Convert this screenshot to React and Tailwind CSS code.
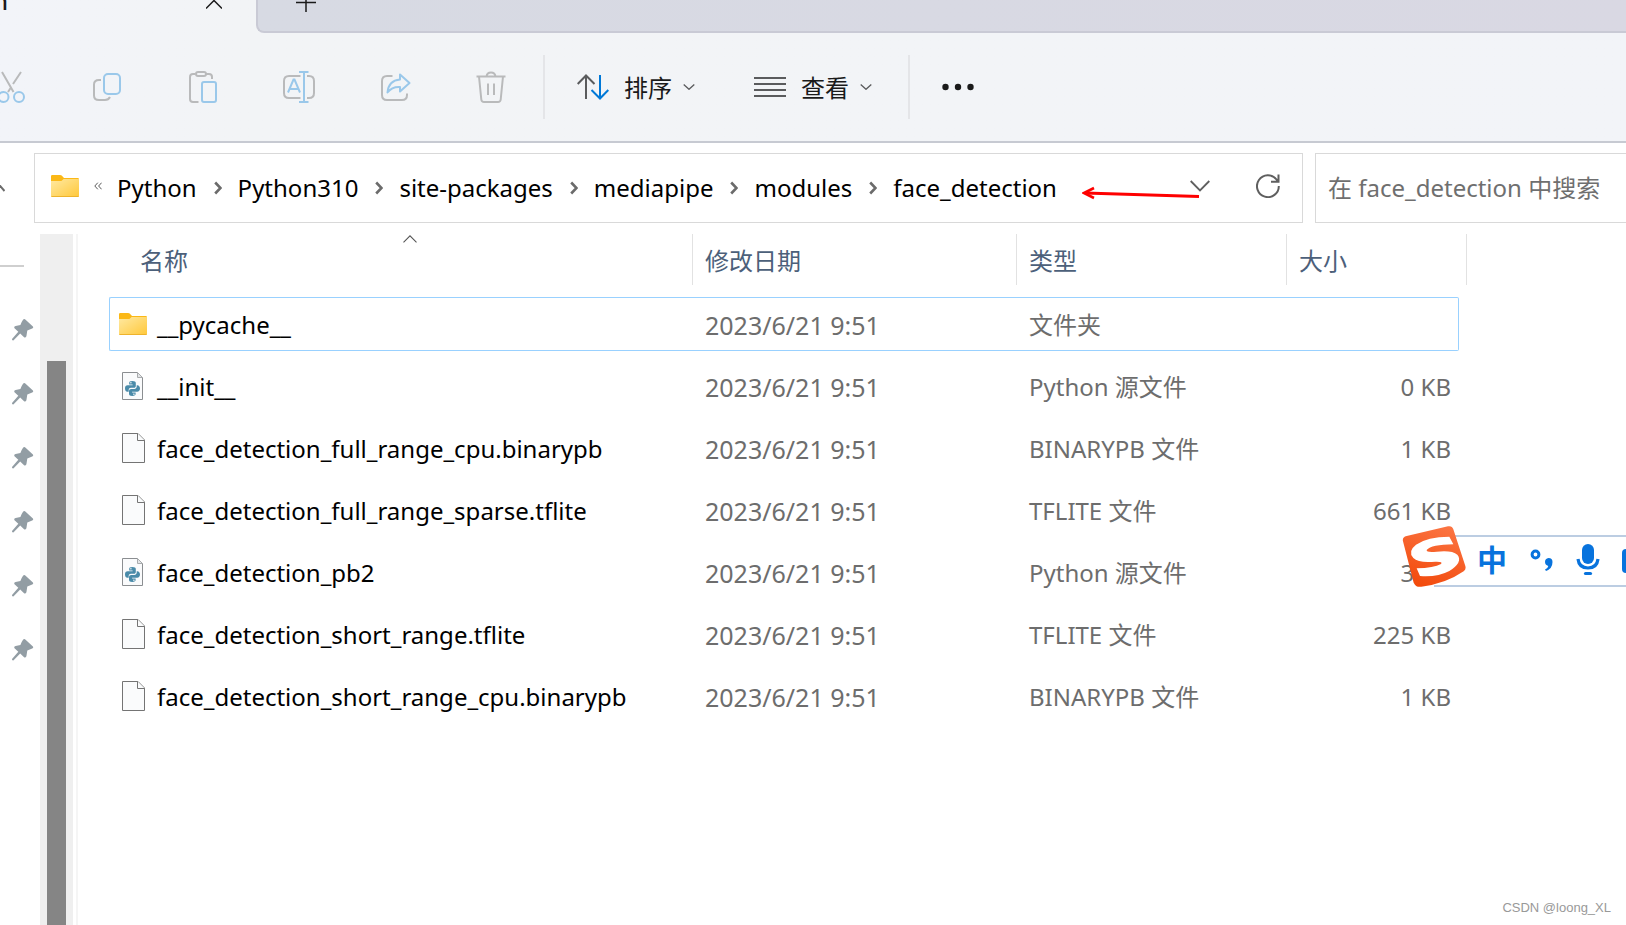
const FONT = "font-['Noto_Sans','Noto_Sans_CJK_SC',sans-serif]";

function Chevron({ className, d, box, stroke = 2 }) {
  return (
    <svg className={className} viewBox={box} fill="none" stroke="currentColor" strokeWidth={stroke} aria-hidden="true">
      <path d={d} />
    </svg>
  );
}

function FolderIcon({ id }) {
  return (
    <svg className="h-[22px] w-7 shrink-0" viewBox="0 0 28 22" aria-hidden="true">
      <defs>
        <linearGradient id={id} x1="0" y1="0" x2="1" y2="1">
          <stop offset="0" stopColor="#ffe9a2" />
          <stop offset="1" stopColor="#ffc83a" />
        </linearGradient>
      </defs>
      <path d="M0 1.2Q0 0 1.2 0H9.2Q10 0 10.7.6L13 3H26.8Q28 3 28 4.2V10H0Z" fill="#fbb816" />
      <path d="M0 6H9.6Q10.4 6 11 5.4L12.6 4H28V20.8Q28 22 26.8 22H1.2Q0 22 0 20.8Z" fill={`url(#${id})`} />
      <path d="M.4 21.5H27.6" stroke="#eeb32c" />
    </svg>
  );
}

function FileIcon() {
  return (
    <svg className="h-[30px] w-[23px] shrink-0" viewBox="0 0 23 30" fill="#fafbfc" stroke="#747474" aria-hidden="true">
      <path d="M.5.5H16L22.5 7V29.5H.5Z" />
      <path d="M15.5.5V7.5H22.5" />
    </svg>
  );
}

function PythonIcon() {
  return (
    <svg className="h-7 w-[21px] shrink-0" viewBox="0 0 21 28" aria-hidden="true">
      <path d="M.5.5H15.5L20.5 5.5V27.5H.5Z" fill="#fafbfc" stroke="#8b8e91" />
      <path d="M15.5.5V5.5H20.5Z" fill="#e3e5e7" stroke="#a8abad" />
      <path d="M10.4 9C7.6 9 7.2 9.8 7.2 10.9V12.5H10.6V13.2H5.6C4 13.2 3 14.4 3 16.4S4 19.7 5.4 19.7H6.7V18C6.7 16.7 7.7 15.8 9 15.8H12C13 15.8 13.8 15 13.8 14V10.9C13.8 9.7 12.6 9 10.4 9Z" fill="#4a8ba9" />
      <path d="M10.1 24C12.9 24 13.6 23.2 13.6 22.1V20.5H10.1V19.8H15.2C16.8 19.8 18 18.6 18 16.6S16.9 13.3 15.4 13.3H14.7V14.6C14.7 16 13.6 16.9 12.4 16.9H9.2C8 16.9 7 17.8 7 18.9V22.1C7 23.3 8.2 24 10.1 24Z" fill="#4a8ba9" />
      <circle cx="8.9" cy="10.8" r=".7" fill="#fff" />
      <circle cx="11.9" cy="22.2" r=".7" fill="#fff" />
    </svg>
  );
}

function PinIcon() {
  return (
    <svg className="h-[22px] w-[22px]" viewBox="0 0 22 22" fill="#929da4" aria-hidden="true">
      <path d="M11.2.6Q12.4-.4 13.6.7L20.9 7.4Q21.8 8.8 20.2 9.5L15.3 11.6Q14.9 14.6 14.4 17.2Q13.4 19.3 11.8 17.9L8.2 14.4L1.6 21.2Q.3 21.8 0 20.6V19.9L6.3 12.8L2.5 9.3Q1.6 7.6 3.6 7L8.4 6Q9.4 3.2 11.2.6Z" />
    </svg>
  );
}

const GREY = "#b9babb";
const BLUE = "#9ac8ea";

const tools = [
  {
    label: "剪切",
    art: (
      <>
        <path d="M7 1 18.5 21M26 1 18 13M15.8 16.8 13 21" stroke={GREY} />
        <circle cx="8.5" cy="26" r="5" stroke={BLUE} />
        <circle cx="24" cy="26" r="5" stroke={BLUE} />
      </>
    ),
  },
  {
    label: "复制",
    art: (
      <>
        <path d="M10 9H8Q3 9 3 13.5V24.5Q3 29 8 29H14Q17.5 29 19 26" stroke={GREY} />
        <rect x="13" y="3" width="16" height="20" rx="4" stroke={BLUE} />
      </>
    ),
  },
  {
    label: "粘贴",
    art: (
      <>
        <path d="M8.5 3H6Q3 3 3 6V28Q3 31 6 31H11.5M19 3H22Q25 3 25 6V8" stroke={GREY} />
        <rect x="9" y="1" width="10" height="4" rx="2" stroke={GREY} />
        <rect x="15" y="11" width="14" height="20" rx="2" stroke={BLUE} />
      </>
    ),
  },
  {
    label: "重命名",
    art: (
      <>
        <path d="M17.5 5H6Q1 5 1 10V22Q1 27 6 27H17.5M24 5H26Q31 5 31 10V22Q31 27 26 27H24" stroke={GREY} />
        <path d="M16 1H25.5M16 31H25.5M21 1V31M5 21.5 10.5 8.5H11.5L17 21.5M7 18H15" stroke={BLUE} />
      </>
    ),
  },
  {
    label: "共享",
    art: (
      <>
        <path d="M13.5 5H8Q3 5 3 10V24Q3 29 8 29H23Q28 29 28 24V22.5" stroke={GREY} />
        <path d="M21 3.500 30.500 12 21 20.500V16Q13 15.500 8.500 21.500Q9.500 9.500 21 8.500Z" stroke={BLUE} strokeLinejoin="round" />
      </>
    ),
  },
  {
    label: "删除",
    art: (
      <>
        <path d="M1.500 5.500H30.500M4 5.500 6.300 28.500Q6.600 31 9 31H23Q25.400 31 25.700 28.500L28 5.500M11.500 5.500Q12 1.500 16 1.500T20.500 5.500M13 12.500V24M19 12.500V24" stroke={GREY} />
      </>
    ),
  },
];

const crumbs = ["Python", "Python310", "site-packages", "mediapipe", "modules", "face_detection"];

const files = [
  { name: "__pycache__", kind: "folder", type: "文件夹", size: "" },
  { name: "__init__", kind: "python", type: "Python 源文件", size: "0 KB" },
  { name: "face_detection_full_range_cpu.binarypb", kind: "file", type: "BINARYPB 文件", size: "1 KB" },
  { name: "face_detection_full_range_sparse.tflite", kind: "file", type: "TFLITE 文件", size: "661 KB" },
  { name: "face_detection_pb2", kind: "python", type: "Python 源文件", size: "3 KB" },
  { name: "face_detection_short_range.tflite", kind: "file", type: "TFLITE 文件", size: "225 KB" },
  { name: "face_detection_short_range_cpu.binarypb", kind: "file", type: "BINARYPB 文件", size: "1 KB" },
];

function TabStrip() {
  return (
    <div className="flex h-[33px] overflow-hidden">
      <div className="flex w-64 shrink-0 justify-between pr-[34px]">
        <span className="-mt-[15px] -ml-[7px] text-2xl leading-8 font-medium text-[#1a1a1a]">n</span>
        <button aria-label="关闭标签页" className="h-2.5 w-4">
          <Chevron className="h-2.5 w-4 text-[#1a1a1a]" box="0 0 16 10" d="M0 8.500 8 .5 16 8.500" stroke={1.5} />
        </button>
      </div>
      <div className="flex flex-1 rounded-bl-lg border-b-2 border-l-2 border-[#c9cad5] bg-linear-to-r from-[#d7dae3] to-[#d9d8e3] pl-[38px]">
        <button aria-label="新建标签页" className="h-3 w-5">
          <svg className="h-3 w-5" viewBox="0 0 20 12" fill="none" stroke="#1a1a1a" strokeWidth="1.500" aria-hidden="true">
            <path d="M0 2.500H20M10 0V12" />
          </svg>
        </button>
      </div>
    </div>
  );
}

function Toolbar() {
  return (
    <div className="flex h-[110px] items-center overflow-hidden border-b-2 border-[#c7cad2]">
      <div className="-ml-[5px] flex gap-16">
        {tools.map((t) => (
          <button key={t.label} aria-label={t.label} className="h-8 w-8">
            <svg className="h-8 w-8" viewBox="0 0 32 32" fill="none" strokeWidth="2" aria-hidden="true">
              {t.art}
            </svg>
          </button>
        ))}
      </div>
      <div className="ml-9 h-16 w-0.5 bg-[#e4e5e8]" />
      <button className="ml-8 flex items-center gap-[15px] text-2xl leading-8 text-[#1a1a1a]">
        <svg className="h-[26px] w-8" viewBox="0 0 32 26" fill="none" strokeWidth="2" aria-hidden="true">
          <path d="M9 25V1.500M.7 10 9 1.500 17.500 10" stroke="#5a5b5d" />
          <path d="M23 1V24.500M14.500 16 23 24.500 31.300 16" stroke="#0078d7" />
        </svg>
        <span className="pt-0.5">排序</span>
        <Chevron className="-ml-1 h-1.5 w-3 text-[#5a5b5d]" box="0 0 12 6" d="M.7.5 6 5.300 11.300.5" stroke={1.3} />
      </button>
      <button className="ml-[59px] flex items-center gap-[15px] text-2xl leading-8 text-[#1a1a1a]">
        <svg className="h-5 w-8" viewBox="0 0 32 20" fill="none" stroke="#5a5b5d" strokeWidth="2" aria-hidden="true">
          <path d="M0 1H32M0 7H32M0 13H32M0 19H32" />
        </svg>
        <span className="pt-0.5">查看</span>
        <Chevron className="-ml-1 h-1.5 w-3 text-[#5a5b5d]" box="0 0 12 6" d="M.7.5 6 5.300 11.300.5" stroke={1.3} />
      </button>
      <div className="ml-9 h-16 w-0.5 bg-[#e4e5e8]" />
      <button aria-label="更多" className="ml-8">
        <svg className="h-2 w-8" viewBox="0 0 32 8" fill="#1a1a1a" aria-hidden="true">
          <circle cx="3.500" cy="4" r="3.200" />
          <circle cx="16" cy="4" r="3.200" />
          <circle cx="28.500" cy="4" r="3.200" />
        </svg>
      </button>
    </div>
  );
}

function AddressRow() {
  return (
    <div className="flex pt-2.5">
      <button aria-label="向上" className="flex w-[34px] shrink-0 items-center">
        <Chevron className="h-2 w-[5px] text-[#6b6b6b]" box="0 0 5 8" d="M-2 -.5 4.500 7" />
      </button>
      <div className="relative flex h-[70px] flex-1 items-center border border-[#d9d9d9] pl-4">
        <div className="flex items-center pb-1">
          <FolderIcon id="crumbFolder" />
          <button aria-label="更多位置" className="mx-[15px] h-2 w-2">
            <Chevron className="h-2 w-2 text-[#5a5a5a]" box="0 0 8 8" d="M3.800.7.8 4 3.800 7.300M7.600.7 4.600 4 7.600 7.300" stroke={1} />
          </button>
        </div>
        <nav aria-label="路径" className="flex items-center gap-[17px] text-2xl leading-8 text-black">
          {crumbs.map((c, i) => (
            <span key={c} className="flex items-center gap-4">
              {i > 0 && (
                <Chevron className="h-3.5 w-2 text-[#6b6b6b]" box="0 0 8 14" d="M1.200 1.500 6.500 7 1.200 12.500" stroke={2.6} />
              )}
              <a href="#path">{c}</a>
            </span>
          ))}
        </nav>
        <div className="mr-[22px] ml-auto flex items-center gap-[46px] pb-1 text-[#5f5f5f]">
          <button aria-label="历史记录">
            <Chevron className="h-3 w-5" box="0 0 20 12" d="M.7 1 10 10.500 19.300 1" stroke={1.8} />
          </button>
          <button aria-label="刷新">
            <svg className="h-6 w-6" viewBox="0 0 24 24" fill="none" stroke="currentColor" strokeWidth="2" aria-hidden="true">
              <path d="M22.800 12A10.900 10.900 0 1 1 20.500 5.500L22.500 7.500M22.500.5V7.800H15" />
            </svg>
          </button>
        </div>
        <svg className="absolute top-8 right-[102px] h-4 w-[118px]" viewBox="0 0 118 16" fill="none" stroke="#fe0000" strokeWidth="3" aria-hidden="true">
          <path d="M3 7 117 10.500" />
          <path d="M12 2 2 7 12 12" strokeWidth="2.600" />
        </svg>
      </div>
      <input
        aria-label="搜索"
        placeholder="在 face_detection 中搜索"
        className="ml-3 h-[70px] w-[311px] rounded-none border border-r-0 border-[#d9d9d9] pb-0.5 pl-3 text-2xl leading-8 outline-none placeholder:text-[#6f6f6f] placeholder:opacity-100"
      />
    </div>
  );
}

function Sidebar() {
  return (
    <div className="flex shrink-0">
      <div className="flex w-10 flex-col pt-[31px]">
        <div className="h-0.5 w-6 bg-[#cfcfcf]" />
        <div className="mt-[52px] ml-3 flex flex-col gap-[42px]">
          {[0, 1, 2, 3, 4, 5].map((i) => (
            <PinIcon key={i} />
          ))}
        </div>
      </div>
      <div className="flex w-[33px] flex-col bg-[#efefef] pt-[127px]">
        <div className="ml-[7px] w-[19px] flex-1 bg-[#858585]" />
      </div>
      <div className="ml-[3px] w-0.5 bg-[#f5f5f5]" />
    </div>
  );
}

function HeadCell({ children, className = "", pad = "pl-3" }) {
  return (
    <th className={`relative p-0 pb-3 text-left font-normal ${className}`}>
      <div className={`flex h-[51px] items-center border-r border-[#e2e2e2] pt-0.5 text-[#4c607a] ${pad}`}>{children}</div>
    </th>
  );
}

function FileTable() {
  return (
    <table className="ml-[31px] w-[1350px] table-fixed border-separate border-spacing-0 self-start text-2xl leading-8">
      <thead>
        <tr>
          <HeadCell className="w-[584px]" pad="pl-[31px]">
            名称
            <Chevron className="absolute top-px left-[294px] h-2 w-3.5 text-[#555555]" box="0 0 14 8" d="M.5 7.300 7 .8 13.500 7.300" stroke={1.1} />
          </HeadCell>
          <HeadCell className="w-[324px]">修改日期</HeadCell>
          <HeadCell className="w-[270px]">类型</HeadCell>
          <th className="p-0 pb-3 text-left font-normal">
            <div className="-mr-2 flex h-[51px] items-center border-r border-[#e2e2e2] pt-0.5 pl-3 text-[#4c607a]">大小</div>
          </th>
        </tr>
      </thead>
      <tbody>
        {files.map((f, i) => {
          const edge = i === 0 ? "border-[#99d1ff]" : "border-transparent";
          return (
            <tr key={f.name} className="text-[#6d6d6d]">
              <td className="p-0 pb-2">
                <div className={`flex h-[54px] items-center rounded-l-xs border-y border-l ${edge}`}>
                  <span className="flex w-[47px] pl-[9px]">
                    <span className={f.kind === "folder" ? "" : "pl-[3px]"}>
                      {f.kind === "folder" && <FolderIcon id="rowFolder" />}
                      {f.kind === "python" && <PythonIcon />}
                      {f.kind === "file" && <FileIcon />}
                    </span>
                  </span>
                  <span className="pt-0.5 whitespace-nowrap text-black">{f.name}</span>
                </div>
              </td>
              <td className="p-0 pb-2">
                <div className={`flex h-[54px] items-center border-y pt-0.5 pl-3 text-[25px] ${edge}`}>2023/6/21 9:51</div>
              </td>
              <td className="p-0 pb-2">
                <div className={`flex h-[54px] items-center border-y pt-0.5 pl-3 ${edge}`}>{f.type}</div>
              </td>
              <td className="p-0 pb-2">
                <div className={`flex h-[54px] items-center justify-end rounded-r-xs border-y border-r pt-0.5 pr-[7px] ${edge}`}>{f.size}</div>
              </td>
            </tr>
          );
        })}
      </tbody>
    </table>
  );
}

function ImeBar() {
  return (
    <div className="absolute top-[526px] right-0 flex h-[68px] w-56 items-center overflow-hidden">
      <div className="absolute top-[9px] right-0 left-8 h-[52px] border-y-2 border-[#bccde2] bg-white" />
      <svg className="relative h-[62px] w-16 shrink-0 self-start" viewBox="0 0 192 186" aria-hidden="true">
        <defs>
          <linearGradient id="sogou" x1=".7" y1="0" x2=".3" y2="1">
            <stop offset="0" stopColor="#fb7442" />
            <stop offset="1" stopColor="#f24a0c" />
          </linearGradient>
        </defs>
        <path d="M14 30 138 1Q150 -2 154 10L190 120Q193 130 185 136Q130 174 58 182Q42 185 35 170L3 46Q0 33 14 30Z" fill="url(#sogou)" />
        <path d="M142 32Q76 32 42 56Q16 76 34 96Q50 112 100 107Q124 106 117 114Q96 126 44 127L54 150Q106 154 142 135Q184 108 166 86Q150 72 104 77Q72 80 74 72Q88 56 154 55Z" fill="#fff" />
      </svg>
      <button className="relative ml-2.5 w-8 text-[30px] leading-8 font-bold text-[#0873dd]">中</button>
      <button aria-label="中文标点" className="relative ml-[22px]">
        <svg className="h-6 w-6" viewBox="0 0 24 24" aria-hidden="true">
          <circle cx="5.500" cy="6.500" r="3.400" fill="none" stroke="#0873dd" strokeWidth="3" />
          <path d="M18.500 10A4 4 0 0 1 22.500 14Q22.500 20.500 16 23L15 21.500Q18 20 18.300 17.900A4 4 0 0 1 18.500 10Z" fill="#0873dd" />
        </svg>
      </button>
      <button aria-label="语音" className="relative ml-[22px]">
        <svg className="h-8 w-6" viewBox="0 0 24 32" aria-hidden="true">
          <rect x="6" y="0" width="12" height="20" rx="6" fill="#0873dd" />
          <path d="M2 15Q3 24 12 24T22 15" fill="none" stroke="#0873dd" strokeWidth="3.200" />
          <path d="M9.500 29.500H14.500" stroke="#0873dd" strokeWidth="3.200" strokeLinecap="round" />
        </svg>
      </button>
      <button aria-label="键盘" className="absolute top-[23px] right-0 h-6 w-1 rounded-l-sm bg-[#0873dd]" />
    </div>
  );
}

export default function App() {
  return (
    <div className={`relative flex min-h-screen flex-col overflow-hidden bg-white ${FONT}`}>
      <header className="bg-linear-to-r from-[#f2f4f9] via-[#f2f4f6] via-15% to-[#f2f4f8]">
        <TabStrip />
        <Toolbar />
      </header>
      <AddressRow />
      <main className="mt-[11px] flex flex-1">
        <Sidebar />
        <FileTable />
      </main>
      <ImeBar />
      <p className="absolute right-[15px] bottom-[7px] font-['Liberation_Sans',sans-serif] text-[13px] leading-5 text-[#999999]">CSDN @loong_XL</p>
    </div>
  );
}
